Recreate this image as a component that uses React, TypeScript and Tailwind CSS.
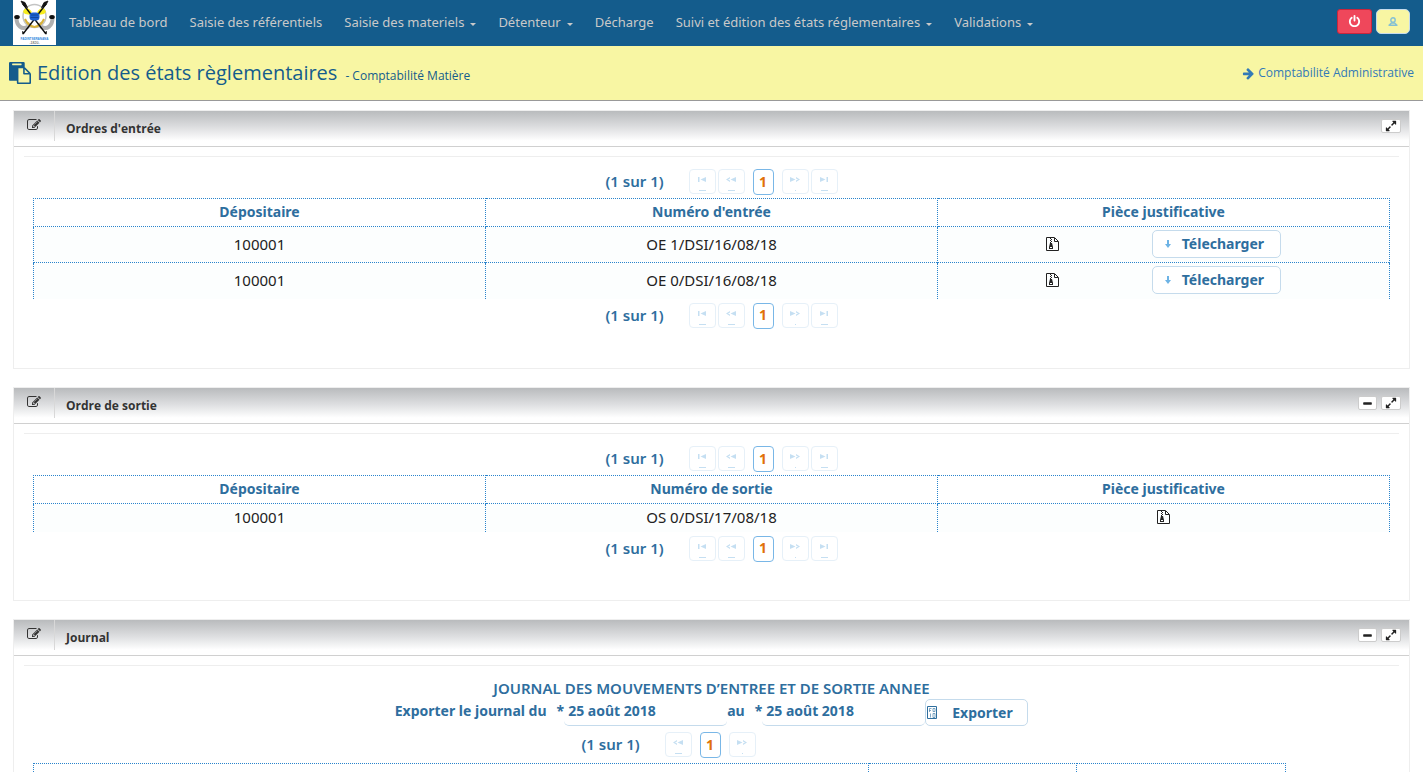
import React from "react";

const FA = {
  edit: "M888 1184l116-116-152-152-116 116v56h96v96h56zm440-720q-16-16-33 1l-350 350q-17 17-1 33t33-1l350-350q17-17 1-33zm80 594v190q0 119-84.5 203.5t-203.5 84.5h-832q-119 0-203.5-84.5t-84.5-203.5v-832q0-119 84.5-203.5t203.5-84.5h832q63 0 117 25 15 7 18 23 3 17-9 29l-49 49q-14 14-32 8-23-6-45-6h-832q-66 0-113 47t-47 113v832q0 66 47 113t113 47h832q66 0 113-47t47-113v-126q0-13 9-22l64-64q15-15 35-7t20 29zm-96-738l288 288-672 672h-288v-288zm444 132l-92 92-288-288 92-92q28-28 68-28t68 28l152 152q28 28 28 68t-28 68z",
  expand: "M883 1056q0 13-10 23l-332 332 144 144q19 19 19 45t-19 45-45 19h-448q-26 0-45-19t-19-45v-448q0-26 19-45t45-19 45 19l144 144 332-332q10-10 23-10t23 10l114 114q10 10 10 23zm781-864v448q0 26-19 45t-45 19-45-19l-144-144-332 332q-10 10-23 10t-23-10l-114-114q-10-10-10-23t10-23l332-332-144-144q-19-19-19-45t19-45 45-19h448q26 0 45 19t19 45z",
  minus: "M1600 800v192q0 40-28 68t-68 28h-1216q-40 0-68-28t-28-68v-192q0-40 28-68t68-28h1216q40 0 68 28t28 68z",
  paste: "M768 1664h896v-640h-416q-40 0-68-28t-28-68v-416h-384v1152zm256-1440v-64q0-13-9.5-22.5t-22.5-9.5h-704q-13 0-22.5 9.5t-9.5 22.5v64q0 13 9.5 22.5t22.5 9.5h704q13 0 22.5-9.5t9.5-22.5zm256 672h299l-299-299v299zm512 128v672q0 40-28 68t-68 28h-960q-40 0-68-28t-28-68v-160h-544q-40 0-68-28t-28-68v-1344q0-40 28-68t68-28h1088q40 0 68 28t28 68v328q21 13 36 28l408 408q28 28 48 76t20 88z",
  power: "M1664 896q0 156-61 298t-164 245-245 164-298 61-298-61-245-164-164-245-61-298q0-182 80.5-343t226.5-270q43-32 95.5-25t83.5 50q32 42 24.5 94.5t-49.5 84.5q-98 74-151.5 181t-53.5 228q0 104 40.5 198.5t109.5 163.5 163.5 109.5 198.5 40.5 198.5-40.5 163.5-109.5 109.5-163.5 40.5-198.5q0-121-53.5-228t-151.5-181q-42-32-49.5-84.5t24.5-94.5q31-43 84-50t95 25q146 109 226.5 270t80.5 343zm-640-768v640q0 52-38 90t-90 38-90-38-38-90v-640q0-52 38-90t90-38 90 38 38 90z",
  right: "M1600 960q0 54-37 91l-651 651q-39 37-91 37-51 0-90-37l-75-75q-38-38-38-91t38-91l293-293h-704q-52 0-84.5-37.5t-32.5-90.5v-128q0-53 32.5-90.5t84.5-37.5h704l-293-294q-38-36-38-90t38-90l75-75q38-38 90-38 53 0 91 38l651 651q37 35 37 90z",
};

function Icon({ name, className }: { name: keyof typeof FA; className: string }) {
  return (
    <svg viewBox="0 0 1792 1792" className={className} fill="currentColor" aria-hidden="true">
      <path d={FA[name]} />
    </svg>
  );
}

function ArchiveIcon() {
  return (
    <svg viewBox="0 0 13 14" className="h-[14px] w-[13px]" fill="none" aria-hidden="true">
      <path d="M.5 .5H8.500L12.500 4.500V13.500H.5Z" stroke="#222" />
      <path d="M8.500 1V4.500H12" stroke="#222" />
      <path d="M4 1h1v1H4zM5 2h1v1H5zM4 3h1v1H4zM5 4h1v1H5zM4 5h1v1H4z" fill="#222" />
      <path d="M4 6h2l1 4v2H3v-2Z" fill="#222" />
      <path d="M4 10h2v1H4z" fill="#fff" />
    </svg>
  );
}

function Logo() {
  return (
    <svg viewBox="0 0 43 45" className="mr-[2px] h-[45px] w-[43px] shrink-0" role="img" aria-label="Logo">
      <rect width="43" height="45" fill="#fff" />
      <path d="M3.500 18C3.500 26 9 30 14.500 27L17 23M39.500 18C39.500 26 34 30 28.500 27L26 23" fill="none" stroke="#b0b0b0" strokeWidth="4" />
      <circle cx="21.500" cy="16" r="11.500" fill="none" stroke="#c4c4c4" strokeWidth="1.500" />
      <path d="M10 12Q12 6 16 9Q20 11 18 15L12 14ZM33 12Q31 6 27 9Q23 11 25 15L31 14Z" fill="#f6ec1f" />
      <path d="M12 19Q15 26 21.500 27Q28 26 31 19" fill="none" stroke="#d8b23a" strokeWidth="2" />
      <path d="M10 4L33 34M33 4L10 34" stroke="#111" strokeWidth="1.400" />
      <path d="M8 1L12 2.500L14.500 7.500L10 5ZM35 1L31 2.500L28.500 7.500L33 5Z" fill="#111" stroke="#111" strokeWidth=".8" />
      <path d="M9 31l3 1.500-2.500 2zM34 31l-3 1.500 2.500 2z" fill="#111" />
      <ellipse cx="4" cy="17" rx="2.800" ry="2" fill="#111" />
      <ellipse cx="39" cy="17" rx="2.800" ry="2" fill="#111" />
      <rect x="16.500" y="12.500" width="10" height="8" rx="3.500" fill="#1b62d0" />
      <path d="M18 15h7M17.500 17.500h8" stroke="#0b3f91" strokeWidth=".8" />
      <text x="21.500" y="39.500" fontSize="3" fontWeight="bold" textAnchor="middle" fill="#2f86e0" fontFamily="Liberation Sans, sans-serif">FADINTSERANANA</text>
      <text x="21.500" y="44" fontSize="3.500" textAnchor="middle" fill="#333" fontFamily="Liberation Sans, sans-serif">-1820-</text>
    </svg>
  );
}

const NAV: [string, boolean][] = [
  ["Tableau de bord", false],
  ["Saisie des référentiels", false],
  ["Saisie des materiels", true],
  ["Détenteur", true],
  ["Décharge", false],
  ["Suivi et édition des états réglementaires", true],
  ["Validations", true],
];

type Step = "first" | "prev" | "next" | "last";

const STEP_PATHS: Record<Step, string> = {
  first: "M1 0h1.500v5H1zM9 0v5L3.500 2.500Z",
  prev: "M4 0v1.500L2 2.500L4 3.500V5L0 2.500ZM10 0v5L4.500 2.500Z",
  next: "M0 0v5L5.500 2.500ZM6 0v1.500L8 2.500L6 3.500V5L10 2.500Z",
  last: "M1 0v5L6.500 2.500ZM7.500 0H9v5H7.500z",
};

const STEP_LABELS: Record<Step, string> = {
  first: "Première page",
  prev: "Page précédente",
  next: "Page suivante",
  last: "Dernière page",
};

function StepButton({ step }: { step: Step }) {
  return (
    <button
      type="button"
      disabled
      aria-label={STEP_LABELS[step]}
      className="flex h-[25px] w-[27px] flex-col items-center justify-between rounded-[4px] border border-[#e6f0f8] bg-white pt-[7px] pb-[2px]"
    >
      <svg viewBox="0 0 10 5" className="h-[5px] w-[10px]" fill="#c5dff2" aria-hidden="true">
        <path d={STEP_PATHS[step]} />
      </svg>
      <span className={step === "next" ? "h-px w-px bg-[#c5dff2]" : "h-px w-[7px] bg-[#c5dff2]"} />
    </button>
  );
}

function Pager({ ends = true }: { ends?: boolean }) {
  return (
    <div className="flex items-start justify-center pl-5 text-[#2e6e9e]">
      <span className="mr-[25px] text-[15px] leading-6 font-semibold">(1 sur 1)</span>
      <span className="flex gap-[2px]">
        {ends && <StepButton step="first" />}
        <StepButton step="prev" />
      </span>
      <button type="button" className="mx-2 h-[26px] w-[21px] rounded-[4px] border border-[#79b7e7] bg-white pb-px text-[14px] leading-5 font-bold text-[#e17009]">
        1
      </button>
      <span className="flex gap-[2px]">
        <StepButton step="next" />
        {ends && <StepButton step="last" />}
      </span>
    </div>
  );
}

function Panel({ title, minimize, children, className }: { title: string; minimize?: boolean; children: React.ReactNode; className: string }) {
  return (
    <section className={`border border-[#eee] bg-white ${className}`}>
      <header className="flex h-9 items-start border-b border-[#d0d0d0] bg-linear-to-b from-[#b9bbbd] via-[#dcdddf] via-45% to-white to-85%">
        <span className="flex h-[30px] w-[41px] items-center justify-center border-r border-[#d8d8d8] pb-[2px] text-[#333]">
          <Icon name="edit" className="h-[14px] w-[14px]" />
        </span>
        <h2 className="ml-[11px] pt-2 font-['Open_Sans',sans-serif] text-[12px] leading-5 font-bold text-[#333]">{title}</h2>
        <div className="mt-2 mr-2 ml-auto flex gap-1">
          {minimize && (
            <button type="button" aria-label="Réduire" className="flex h-[14px] w-[19px] items-center justify-center rounded-[2px] border border-[#ccc] bg-white text-[#222]">
              <Icon name="minus" className="h-[11px] w-[11px]" />
            </button>
          )}
          <button type="button" aria-label="Agrandir" className="flex h-[14px] w-[20px] items-center justify-center rounded-[2px] border border-[#ccc] bg-white text-[#222]">
            <Icon name="expand" className="h-[12px] w-[12px]" />
          </button>
        </div>
      </header>
      <div className="mx-[10px] mt-[9px] border-t border-[#eee] px-[9px] pt-3">{children}</div>
    </section>
  );
}

function OrderTable({ heads, children }: { heads: string[]; children: React.ReactNode }) {
  return (
    <table className="mt-[3px] mb-1 w-full table-fixed border-collapse text-center leading-5">
      <thead>
        <tr className="h-7">
          {heads.map((h) => (
            <th key={h} className="border border-dotted border-[#2a84cc] p-0 pb-px text-[14px] font-bold text-[#2e6e9e]">{h}</th>
          ))}
        </tr>
      </thead>
      <tbody className="bg-[#fcfefe] text-[15px] text-[#222]">{children}</tbody>
    </table>
  );
}

const CELL = "border-x border-t border-dotted border-[#2a84cc] p-0 pb-px";

function DownloadRow({ order }: { order: string }) {
  return (
    <tr className="h-9">
      <td className={CELL}>100001</td>
      <td className={CELL}>{order}</td>
      <td className={CELL}>
        <div className="flex items-center pl-[24%]">
          <a href="#piece" aria-label="Pièce justificative"><ArchiveIcon /></a>
          <button type="button" className="ml-[27%] flex h-7 w-[129px] items-center rounded-[5px] border border-[#c5dbec] bg-white pl-3 text-[14px] font-bold text-[#2e6e9e]">
            <svg viewBox="0 0 6 8" className="mr-[11px] h-2 w-[6px]" fill="#6db3e5" aria-hidden="true">
              <path d="M2 0h2v4h2L3 8L0 4h2z" />
            </svg>
            Télecharger
          </button>
        </div>
      </td>
    </tr>
  );
}

function DateField({ id, label }: { id: string; label: string }) {
  return (
    <>
      <label htmlFor={id}>{label}</label>
      <input
        id={id}
        type="text"
        defaultValue="25 août 2018"
        className="h-[27px] w-[163px] rounded-[5px] border-b border-[#c5dbec] bg-transparent px-1 pb-[3px] text-[14px] font-bold outline-none"
      />
    </>
  );
}

export default function App() {
  return (
    <div className="h-screen overflow-hidden bg-white font-['Noto_Sans','Open_Sans',sans-serif]">
      <nav className="flex h-[46px] items-start bg-[#145c8c] pl-[13px] text-[13px] text-[#c9c9c9]">
        <Logo />
        <ul className="flex">
          {NAV.map(([label, caret]) => (
            <li key={label}>
              <a href="#menu" className="flex h-[45px] items-center px-[11px] whitespace-nowrap">
                {label}
                {caret && (
                  <svg viewBox="0 0 6 3" className="mt-[3px] ml-[6px] h-[3px] w-[6px]" fill="currentColor" aria-hidden="true">
                    <path d="M0 0h6L3 3z" />
                  </svg>
                )}
              </a>
            </li>
          ))}
        </ul>
        <div className="mt-[9px] mr-[13px] ml-auto flex gap-1">
          <button type="button" aria-label="Déconnexion" className="flex h-[25px] w-[35px] items-center justify-center rounded-[3px] border border-[#c9253c] bg-[#ef475b] text-white">
            <Icon name="power" className="h-[13px] w-[13px]" />
          </button>
          <button type="button" aria-label="Profil" className="flex h-[25px] w-[34px] items-center justify-center rounded-[5px] border border-[#c5dbec] bg-[#f8f6a3]">
            <svg viewBox="0 0 10 9" className="h-[9px] w-[10px]" fill="none" stroke="#84c0d4" strokeWidth="1.400" aria-hidden="true">
              <circle cx="5" cy="3" r="2.200" />
              <path d="M.5 8.200h9M1.500 7.800L3.500 6h3L8.500 7.800" />
            </svg>
          </button>
        </div>
      </nav>

      <div className="flex h-[55px] items-center justify-between border-b border-[#999] bg-[#f8f6a3] px-[9px] text-[#145c8c]">
        <h1 className="flex items-center">
          <Icon name="paste" className="h-[22px] w-[22px]" />
          <span className="ml-[6px] flex items-baseline gap-2 font-['Open_Sans',sans-serif] text-[20px] whitespace-nowrap">
            Edition des états règlementaires
            <span className="text-[12px] font-medium">- Comptabilité Matière</span>
          </span>
        </h1>
        <a href="#administrative" className="flex items-center gap-[3px] font-['Open_Sans',sans-serif] text-[12px] font-medium text-[#337ab7]">
          <Icon name="right" className="h-[13px] w-[13px]" />
          Comptabilité Administrative
        </a>
      </div>

      <main className="flex flex-col px-[13px] pt-[9px]">
        <Panel title="Ordres d'entrée" className="min-h-[259px]">
          <Pager />
          <OrderTable heads={["Dépositaire", "Numéro d'entrée", "Pièce justificative"]}>
            <DownloadRow order="OE 1/DSI/16/08/18" />
            <DownloadRow order="OE 0/DSI/16/08/18" />
          </OrderTable>
          <Pager />
        </Panel>

        <Panel title="Ordre de sortie" minimize className="mt-[18px] min-h-[214px]">
          <Pager />
          <OrderTable heads={["Dépositaire", "Numéro de sortie", "Pièce justificative"]}>
            <tr className="h-7">
              <td className={CELL}>100001</td>
              <td className={CELL}>OS 0/DSI/17/08/18</td>
              <td className={CELL}>
                <a href="#piece" aria-label="Pièce justificative" className="flex justify-center"><ArchiveIcon /></a>
              </td>
            </tr>
          </OrderTable>
          <Pager />
        </Panel>

        <Panel title="Journal" minimize className="mt-[18px]">
          <div className="text-[14px] font-bold text-[#2e6e9e]">
            <p className="mb-px text-center text-[15px] leading-5 font-semibold">JOURNAL DES MOUVEMENTS D’ENTREE ET DE SORTIE ANNEE</p>
            <form className="mb-[6px] flex items-start justify-center leading-6">
              <span className="mr-[10px]">Exporter le journal du</span>
              <DateField id="from" label="*" />
              <span className="mr-[10px]">au</span>
              <DateField id="to" label="*" />
              <button type="button" className="flex h-[27px] w-[103px] items-center rounded-[5px] border border-[#c5dbec] bg-white pl-px">
                <svg viewBox="0 0 10 13" className="mr-[15px] h-[13px] w-[10px]" fill="none" stroke="#2e6e9e" aria-hidden="true">
                  <path d="M.5 .5h9v12h-9z" />
                  <path d="M2.500 6V2.500H4.500M2.500 4.500H4M6 2.500h2v3H6zM3.500 7.500v4M6 7.500h2v4H6z" strokeWidth=".6" />
                </svg>
                Exporter
              </button>
            </form>
          </div>
          <div className="mr-[106px]">
            <Pager ends={false} />
          </div>
          <table className="mt-[5px] w-[1253px] table-fixed border-collapse text-center text-[14px] text-[#2e6e9e]">
            <thead>
              <tr className="h-7">
                <th className="w-2/3 border border-dotted border-[#2a84cc] p-0 font-bold">Opération</th>
                <th className="border border-dotted border-[#2a84cc] p-0 font-bold">Entrée</th>
                <th className="border border-dotted border-[#2a84cc] p-0 font-bold">Entrée</th>
              </tr>
            </thead>
          </table>
        </Panel>
      </main>
    </div>
  );
}
